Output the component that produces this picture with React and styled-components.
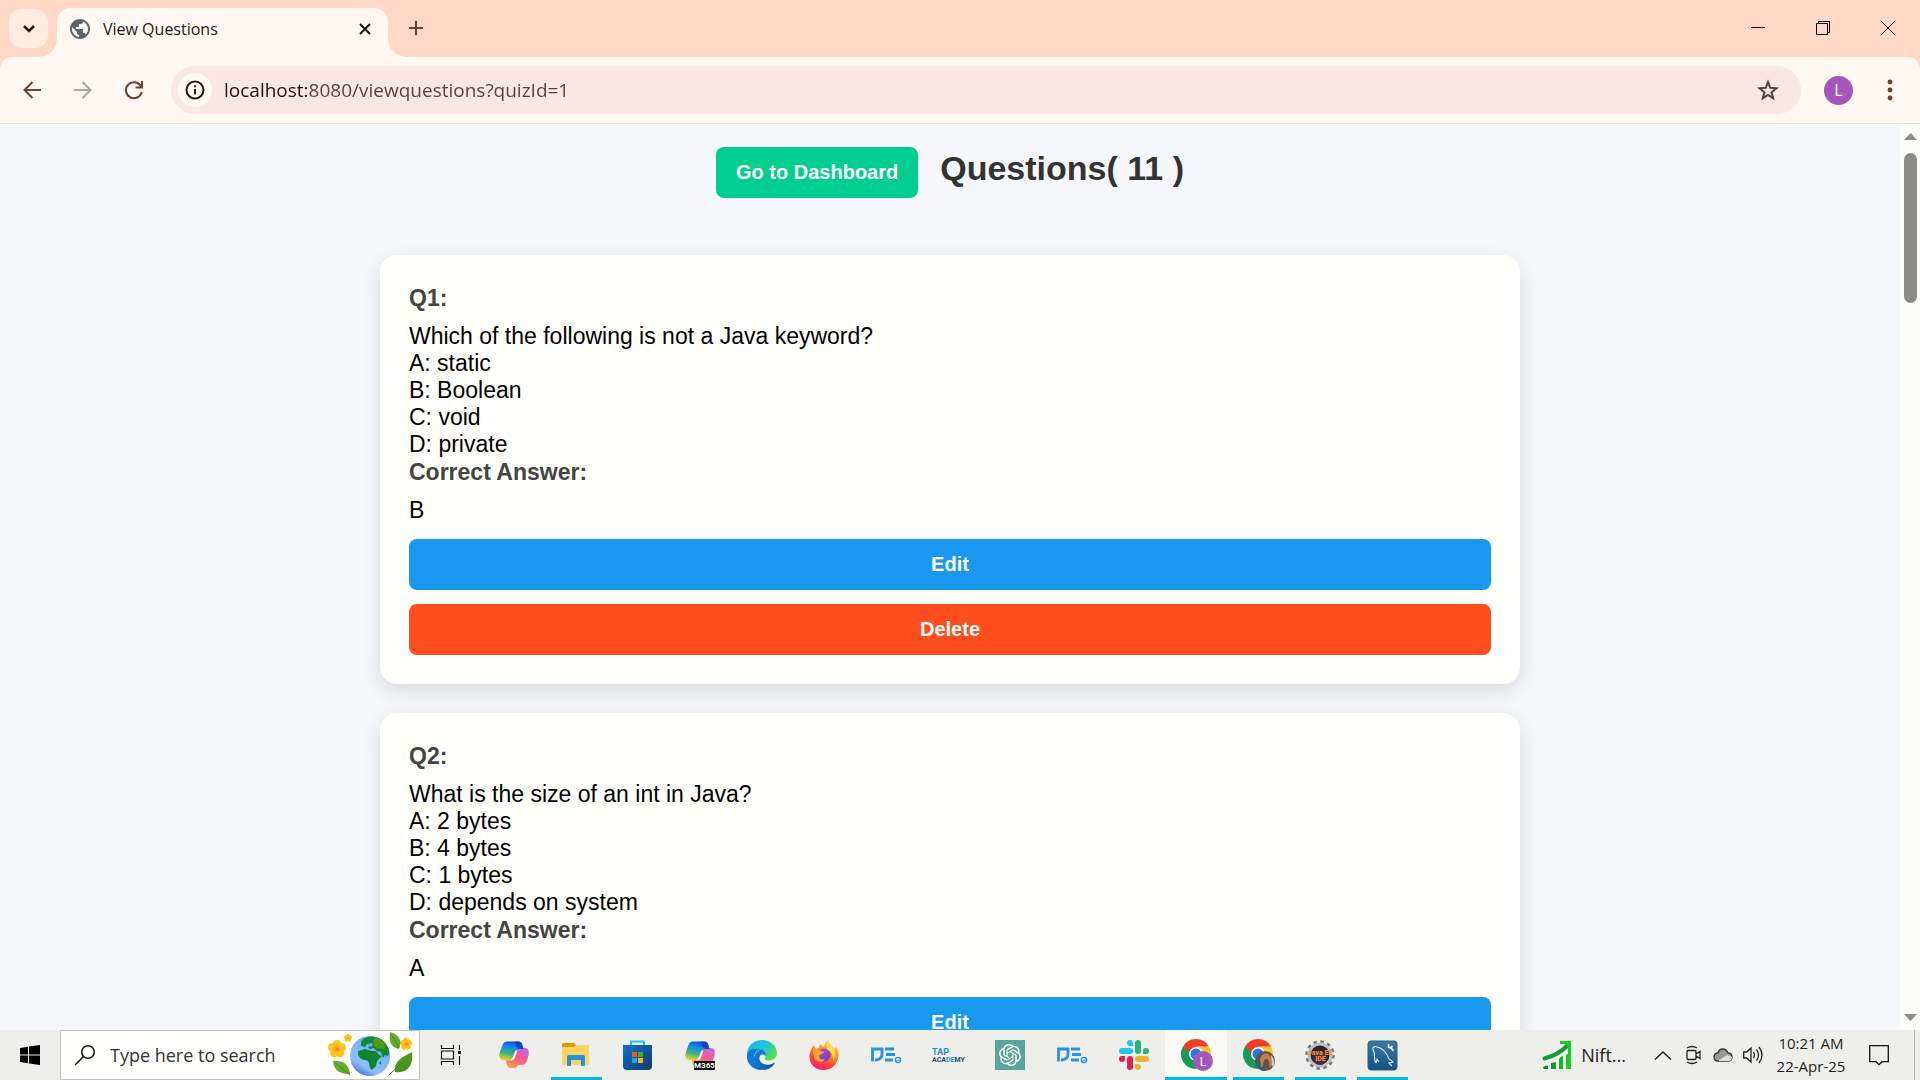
import React from "react";
import styled, { createGlobalStyle, css } from "styled-components";
import { MdPublic } from "react-icons/md";
import { SiOpenai } from "react-icons/si";

const uiFont = `"Open Sans", "Noto Sans", sans-serif`;
const pageFont = `"Liberation Sans", Arial, sans-serif`;

const GlobalStyle = createGlobalStyle`
  * { box-sizing: border-box; }
  body { margin: 0; font-family: ${uiFont}; }
  button { border: 0; padding: 0; background: none; color: inherit; font: inherit; cursor: pointer; }
  input { border: 0; padding: 0; background: none; font: inherit; outline: 0; min-width: 0; }
  svg { display: block; flex: none; overflow: visible; }
`;

const Desktop = styled.div`
  display: flex;
  flex-direction: column;
  height: 100vh;
  overflow: hidden;
`;

/* ---------- browser frame ---------- */

const TabStrip = styled.header`
  display: flex;
  align-items: flex-start;
  height: 57px;
  flex: none;
  padding-left: 9px;
  background: #ffd9c6;
`;

const TabSearch = styled.button`
  display: grid;
  place-items: center;
  width: 39px;
  height: 39px;
  margin: 9px 9px 0 0;
  border-radius: 13px;
  background: #ffece1;
`;

const Tab = styled.div`
  position: relative;
  display: flex;
  align-items: center;
  width: 331px;
  height: 49px;
  margin-top: 8px;
  padding: 0 10px 8px 11px;
  border-radius: 14px 14px 0 0;
  background: #fff7f2;
  color: #291713;
  font-size: 16px;
  line-height: 22px;

  &::before,
  &::after {
    content: "";
    position: absolute;
    bottom: 0;
    width: 17px;
    height: 17px;
  }
  &::before {
    right: 100%;
    background: radial-gradient(circle at 0 0, transparent 16px, #fff7f2 17px);
  }
  &::after {
    left: 100%;
    background: radial-gradient(circle at 100% 0, transparent 16px, #fff7f2 17px);
  }
`;

const TabTitle = styled.span`
  flex: 1;
  margin-left: 11px;
  white-space: nowrap;
`;

const SmallButton = styled.button`
  display: grid;
  place-items: center;
  width: 26px;
  height: 26px;
`;

const NewTab = styled(SmallButton)`
  margin: 15px 0 0 15px;
`;

const WindowControls = styled.div`
  display: flex;
  margin-left: auto;
`;

const WindowButton = styled.button`
  display: grid;
  place-items: center;
  width: 65px;
  height: 56px;
`;

const ToolbarBack = styled.div`
  flex: none;
  background: #ffd9c6;
`;

const Toolbar = styled.nav`
  display: flex;
  align-items: center;
  height: 67px;
  padding: 0 5px 0 6px;
  border-bottom: 1px solid #f7ddd4;
  border-radius: 12px 12px 0 0;
  background: #fff7f2;
`;

const NavButton = styled.button`
  display: grid;
  place-items: center;
  width: 51px;
  height: 48px;
`;

const AddressBar = styled.div`
  display: flex;
  align-items: center;
  flex: 1;
  height: 48px;
  margin-left: 12px;
  padding: 0 20px 0 7px;
  border-radius: 24px;
  background: #f8e7e4;
`;

const SiteInfo = styled.button`
  display: grid;
  place-items: center;
  width: 34px;
  height: 34px;
  border-radius: 50%;
  background: #fff7f2;
`;

const Address = styled.input`
  flex: 1;
  height: 30px;
  margin-left: 12px;
  font-size: 19px;
  color: #53413c;
  background: linear-gradient(90deg, #1c0f0c 84px, #53413c 84px);
  background-clip: text;
  -webkit-background-clip: text;
  -webkit-text-fill-color: transparent;
`;

const Avatar = styled.button`
  width: 29px;
  height: 29px;
  margin: 0 11px 0 23px;
  border-radius: 50%;
  background: #a457b8;
  color: #fff;
  font-size: 16px;
  line-height: 29px;
`;

/* ---------- questions page ---------- */

const Viewport = styled.div`
  display: flex;
  flex: 1;
  min-height: 0;
  background: #f6f7fa;
`;

const Page = styled.main`
  flex: 1;
  overflow-y: auto;
  scrollbar-width: none;
  padding: 23px 24px;
  font-family: ${pageFont};
`;

const PageHeader = styled.div`
  display: flex;
  align-items: center;
  justify-content: center;
  gap: 22px;
  margin-bottom: 57px;
`;

const Heading = styled.h1`
  margin: 0;
  padding-bottom: 10px;
  font-size: 34px;
  line-height: 38px;
  color: #333;
`;

const tones = { go: "#00ce8e", edit: "#1998ef", remove: "#ff4d1d" };

const ActionButton = styled.button`
  height: 51px;
  padding: 0 20px;
  border-radius: 8px;
  background: ${(p) => tones[p.$tone]};
  color: #fff;
  font-family: ${pageFont};
  font-size: 20px;
  font-weight: 700;
`;

const Card = styled.article`
  display: flex;
  flex-direction: column;
  max-width: 1140px;
  margin: 0 auto 29px;
  padding: 29px;
  border-radius: 17px;
  background: #fffffc;
  box-shadow: 0 7px 20px rgba(0, 0, 0, 0.12);
`;

const Label = styled.h3`
  margin: 0 0 11px;
  font-size: 23px;
  line-height: 28px;
  color: #444;
`;

const Line = styled.p`
  margin: 0;
  font-size: 23px;
  line-height: 27px;
  color: #000;
`;

const Actions = styled.div`
  display: flex;
  flex-direction: column;
  gap: 14px;
  margin-top: 15px;
`;

const ScrollTrack = styled.div`
  display: flex;
  flex-direction: column;
  align-items: center;
  width: 20px;
  padding: 9px 0;
  background: #fcfdfa;
`;

const ScrollThumb = styled.div`
  width: 13px;
  height: 150px;
  margin: 13px 0 auto;
  border-radius: 7px;
  background: #8b8b89;
`;

/* ---------- taskbar ---------- */

const Taskbar = styled.footer`
  display: flex;
  flex: none;
  height: 50px;
  background: #eeeeeb;
  color: #222;
`;

const TaskButton = styled.button`
  display: grid;
  place-items: center;
  width: ${(p) => p.$width || 62}px;
  height: 50px;
  ${(p) =>
    p.$open &&
    css`
      background: linear-gradient(#00b7ea, #00b7ea) center bottom / ${p.$active ? 62 : 51}px 3px no-repeat
        ${p.$active ? "#f9f9f6" : "transparent"};
    `}
`;

const SearchBox = styled.label`
  display: flex;
  align-items: center;
  width: 360px;
  padding: 0 5px 0 14px;
  border: 1px solid #c6c6c6;
  background: #fffffd;
`;

const SearchInput = styled.input`
  flex: 1;
  height: 40px;
  margin-left: 15px;
  font-size: 18px;
  &::placeholder { color: #333; opacity: 1; }
`;

const Tray = styled.div`
  display: flex;
  align-items: center;
  margin-left: auto;
`;

const Stocks = styled.button`
  display: flex;
  align-items: center;
  gap: 10px;
  height: 50px;
  margin-right: 22px;
  font-size: 18px;
`;

const TrayButton = styled.button`
  display: grid;
  place-items: center;
  width: 30px;
  height: 50px;
`;

const Clock = styled.button`
  width: 86px;
  height: 50px;
  font-size: 15px;
  line-height: 23px;
  text-align: center;
  white-space: nowrap;
`;

const Notifications = styled(TrayButton)`
  width: 50px;
  margin-right: 10px;
`;

const ShowDesktop = styled.button`
  width: 6px;
  height: 50px;
  border-left: 1px solid #b9b9b7;
`;

/* ---------- drawings ---------- */

const Stroke = ({ w = 20, h = w, color = "#6b4132", sw = 2, children, ...rest }) => (
  <svg width={w} height={h} viewBox={`0 0 ${w} ${h}`} fill="none" stroke={color} strokeWidth={sw} aria-hidden="true" {...rest}>
    {children}
  </svg>
);

const Copilot = ({ id, badge }) => (
  <svg width="30" height="30" viewBox="0 0 30 30" aria-hidden="true">
    <defs>
      <linearGradient id={`${id}a`} x1=".6" y1="0" x2=".3" y2="1">
        <stop offset="0" stopColor="#1349d3" /><stop offset=".35" stopColor="#1191e6" />
        <stop offset=".65" stopColor="#3fb37a" /><stop offset="1" stopColor="#f5d327" />
      </linearGradient>
      <linearGradient id={`${id}b`} x1=".8" y1="0" x2=".3" y2="1">
        <stop offset="0" stopColor="#b66af0" /><stop offset=".45" stopColor="#f9588f" />
        <stop offset="1" stopColor="#ff9a4a" />
      </linearGradient>
    </defs>
    <path fill={`url(#${id}b)`} d="M22 25h-3c-1 2-2 3-4 3h-3c-3 0-4-2-4.500-4L7 20h4c2 0 3-1.500 3.600-3.500l2.400-6c.6-1.800 2-2.500 4-2.500h4.500c4 0 5 3.500 4 7.500l-2 6c-.8 2.500-2.500 3.500-5.500 3.500z" />
    <path fill={`url(#${id}a)`} d="M8 1.500h11c3 0 4 2 4.300 3.500L24.500 9H20c-2 0-3 1.200-3.600 3l-2.600 6c-.7 1.600-2 2.500-4 2.500H5C.8 20.500-.5 17 .7 12.500L3.500 5C4.500 2.500 5.800 1.500 8 1.500z" />
    <path fill="#1237b5" d="M16 1.500h3c3 0 4 2 4.300 3.500L24.500 9H20c-2-1-3-3-4-7.500z" opacity=".7" />
    <path fill="#fff" d="M16.500 10.500h2l-3 8q-1 2-3 2h-1.500q2-1 3-4z" opacity=".85" />
    {badge && (
      <>
        <rect x="9" y="21" width="21" height="9" rx="1" fill="#080808" />
        <text x="19.500" y="28.200" fontSize="8" fontWeight="700" fill="#fff" textAnchor="middle" fontFamily="Roboto, sans-serif">M365</text>
      </>
    )}
  </svg>
);

const Folder = () => (
  <svg width="28" height="26" viewBox="0 0 28 26" aria-hidden="true">
    <path fill="#dc9a04" d="M1 1h11l2 2v4H0V2z" />
    <path fill="#fcd462" d="M0 5h12l2-2h13v20H0z" />
    <path fill="#2392dc" d="M5 24V15q0-2 2-2h14q2 0 2 2v9h-4v-6H9v6z" />
  </svg>
);

const Store = () => (
  <svg width="30" height="30" viewBox="0 0 30 30" aria-hidden="true">
    <defs><linearGradient id="store" x2="1" y2="1"><stop stopColor="#0a72c6" /><stop offset="1" stopColor="#173a70" /></linearGradient></defs>
    <path d="M8 6V1.500h13V6" fill="none" stroke="#1cc3f5" strokeWidth="2" />
    <path fill="url(#store)" d="M0 5h29v21q0 4-4 4H4q-4 0-4-4z" />
    <path fill="#f35325" d="M9 12h5v5H9z" /><path fill="#3fb60f" d="M15 12h5v5h-5z" />
    <path fill="#12a8ee" d="M9 18h5v5H9z" /><path fill="#ffb900" d="M15 18h5v5h-5z" />
  </svg>
);

const Edge = () => (
  <svg width="30" height="30" viewBox="0 0 30 30" aria-hidden="true">
    <defs>
      <linearGradient id="edgeTop" x1="0" y1="0" x2="1" y2=".6"><stop stopColor="#17b0ee" /><stop offset=".6" stopColor="#1ec9d2" /><stop offset="1" stopColor="#5fdc4e" /></linearGradient>
      <linearGradient id="edgeLow" x2="1" y2="1"><stop stopColor="#1683dd" /><stop offset="1" stopColor="#0b55a4" /></linearGradient>
    </defs>
    <path fill="url(#edgeTop)" d="M0 14C0 6 7 0 15 0s15 6 15 13c0 5-4 7.500-8 7.500-3 0-5-1-4-2.500 2-3 1-8-5-8C6 10 1 12 0 17z" />
    <path fill="#087bd8" d="M0 17C0 9 8 7.500 12.500 9.500 9 11 6.500 15 7 19c.5 6 5 9.500 10 10.800C7 31 0 24.500 0 17z" />
    <path fill="url(#edgeLow)" d="M12.500 9.500C17 9 20 13 18.500 16.500c-1-3-5-3-6 .5-1 5 4.500 8.500 10 7.500 3-.4 5-2.200 5.500-2-1.500 4-6 7-11 7.500C5 28 4 14.500 12.500 9.500z" />
  </svg>
);

const Firefox = () => (
  <svg width="30" height="30" viewBox="0 0 30 30" aria-hidden="true">
    <defs>
      <linearGradient id="ffBody" x1=".8" y1="0" x2=".3" y2="1"><stop stopColor="#ffe14a" /><stop offset=".4" stopColor="#ff8b21" /><stop offset=".75" stopColor="#ff3f3f" /><stop offset="1" stopColor="#f22079" /></linearGradient>
      <linearGradient id="ffCore" x2=".4" y2="1"><stop stopColor="#d13edb" /><stop offset="1" stopColor="#6743c9" /></linearGradient>
    </defs>
    <path fill="url(#ffBody)" d="M3 8l1-3 3 4 3-1 1-4 4 3c0-3 2-5 4-7 1 4 5 6 6 9l2-2c3 4 3 8 2 12-2 7-8 11-14 11C6 30 0 24 .5 16 1 12 2 10 3 8z" />
    <circle cx="15" cy="15" r="6.500" fill="url(#ffCore)" />
    <path fill="#ffa52c" d="M4 9c2-1 5 0 7 2l4 1c0 2-4 2-5 4 0 3 3 4 6 3-1 3-7 4-10 0-2-3-2-7-2-10z" />
    <path fill="#ffe64d" d="M19 0c1 5 6 7 7 12 1 4 0 7-2 9 0-6-1-9-5-11-3-3-2-7 0-10z" opacity=".85" />
  </svg>
);

const DeLogo = () => (
  <svg width="31" height="16" viewBox="0 0 31 16" fill="none" stroke="#2593ea" strokeWidth="2.800" aria-hidden="true">
    <path d="M1.500 14.500V2H11v5q0 5-6 6H4M14 2h9M15 7.500h9M14 13h8" />
    <circle cx="27" cy="13" r="2.600" strokeWidth="1.400" /><path d="M24.500 14.500l5-2" strokeWidth="1" />
  </svg>
);

const TapLogo = () => (
  <svg width="32" height="14" viewBox="0 0 32 14" aria-hidden="true" fontFamily="Roboto, sans-serif" fontWeight="700">
    <text x="0" y="7" fontSize="9" fill="#2491d8">TAP</text>
    <text x="0" y="14" fontSize="7" fill="#1e4a66">ACA<tspan fill="#2491d8">DE</tspan>MY</text>
  </svg>
);

const ChatGpt = () => (
  <svg width="30" height="30" viewBox="0 0 30 30" aria-hidden="true">
    <path fill="#58a69b" d="M0 0h30v30H0z" />
    <SiOpenai x="4" y="4" size={22} color="#fff" />
  </svg>
);

const Slack = () => (
  <svg width="30" height="30" viewBox="0 0 30 30" aria-hidden="true">
    <path fill="#1fc5f2" d="M11 0a3 3 0 0 1 3 3v3h-3a3 3 0 0 1 0-6z" /><rect y="8" width="14" height="6" rx="3" fill="#1fc5f2" />
    <path fill="#25b67c" d="M30 11a3 3 0 0 1-3 3h-3v-3a3 3 0 0 1 6 0z" /><rect x="16" width="6" height="14" rx="3" fill="#25b67c" />
    <path fill="#ecb22e" d="M19 30a3 3 0 0 1-3-3v-3h3a3 3 0 0 1 0 6z" /><rect x="16" y="16" width="14" height="6" rx="3" fill="#ecb22e" />
    <path fill="#e91e4f" d="M0 19a3 3 0 0 1 3-3h3v3a3 3 0 0 1-6 0z" /><rect x="8" y="16" width="6" height="14" rx="3" fill="#e91e4f" />
  </svg>
);

const Chrome = ({ photo }) => (
  <svg width="32" height="32" viewBox="-1 0 32 32" aria-hidden="true">
    <path fill="#159b58" d="M15 15L2 7.500A15 15 0 0 0 15 30l6-11z" />
    <path fill="#fcca2c" d="M15 15l6 4-6 11A15 15 0 0 0 28 7.500H15z" />
    <path fill="#f03d25" d="M15 15H9L2 7.500A15 15 0 0 1 28 7.500H15z" />
    <circle cx="15" cy="15" r="7" fill="#fff" /><circle cx="15" cy="15" r="5.500" fill="#2579ed" />
    {photo ? (
      <>
        <circle cx="22" cy="22" r="10" fill="#615349" />
        <path fill="#2e607d" d="M14 28q1-9 4-9l3 13q-4 0-7-4z" />
        <path fill="#c97953" d="M17 20c1-6 8-8 11-2l1 8-3 3c1-5 0-9-3-9-3-1-2 9-5 8z" />
        <path fill="#d8c8b8" d="M28 16q4 4 3 10l-2 2z" />
      </>
    ) : (
      <>
        <circle cx="22" cy="22" r="10" fill="#a457b8" />
        <text x="22" y="26.500" fontSize="12" fill="#fff" textAnchor="middle" fontFamily="Roboto, sans-serif">L</text>
      </>
    )}
  </svg>
);

const JavaEE = () => (
  <svg width="30" height="30" viewBox="0 0 30 30" aria-hidden="true">
    <circle cx="15" cy="15" r="13" fill="none" stroke="#777" strokeWidth="3.500" strokeDasharray="3.400 3.400" />
    <circle cx="15" cy="15" r="11" fill="#2c2432" stroke="#c1c1c1" strokeWidth="3" />
    <circle cx="15" cy="18" r="7" fill="#3f2d55" />
    <g fontFamily="Roboto, sans-serif" fontWeight="900" fill="#f58a1f" textAnchor="middle">
      <text x="15" y="14.500" fontSize="7">Java EE</text><text x="15.500" y="21" fontSize="7">IDE</text>
    </g>
  </svg>
);

const MySql = () => (
  <svg width="29" height="29" viewBox="0 0 29 29" aria-hidden="true">
    <defs><linearGradient id="sql" y2="1" x2="0"><stop stopColor="#3d7ba5" /><stop offset="1" stopColor="#125180" /></linearGradient></defs>
    <rect width="29" height="29" rx="3" fill="url(#sql)" stroke="#27618a" />
    <path d="M8 22C5 18 8 13 5 9c-1-3 2-4 4-3 6 1 10 7 12 12l4 3-4 1 3 3M8 22l1-4 2 3" fill="none" stroke="#dce9f2" strokeWidth="1.100" />
    <path d="M20.500 3v3l2 1 2-2M22.500 6l3 4" fill="none" stroke="#fff" strokeWidth="1.600" />
  </svg>
);

const Flower = ({ x, y, r }) => (
  <g transform={`translate(${x} ${y}) scale(${r / 10})`}>
    {[0, 72, 144, 216, 288].map((a) => (
      <circle key={a} cx="0" cy="-5.500" r="4.800" fill="#fbc51c" transform={`rotate(${a})`} />
    ))}
    <circle r="4" fill="#ffa62b" /><circle r="2" fill="#ff7a2c" />
  </g>
);

const EarthArt = () => (
  <svg width="86" height="46" viewBox="0 0 86 46" aria-hidden="true">
    <defs>
      <linearGradient id="sea" x1=".8" y1="0" x2=".2" y2="1"><stop stopColor="#3f8fe8" /><stop offset=".4" stopColor="#78b6ff" /><stop offset=".75" stopColor="#8fbcff" /><stop offset="1" stopColor="#3566d4" /></linearGradient>
      <linearGradient id="leaf" x2="1" y2="1"><stop stopColor="#8cc63a" /><stop offset="1" stopColor="#3c8d1c" /></linearGradient>
    </defs>
    <circle cx="42" cy="24" r="20" fill="url(#sea)" />
    <path fill="#0f8a2c" d="M33 10c2-4 8-6 14-5 5 1 9 4 11 7 3 4 4 9 2 12l-3-1-2 3-2-6-4-1-3-3-5 1-1-2 5-1-1-3-5 1-2 3-4-1z" />
    <path fill="#0c862b" d="M30 19l7-2 6 2h5l3 4 3 1-5 5-1 5-4 4c-3-1-2-6-4-9l-7-2-3-4z" />
    <path fill="#4d9b12" d="M46 5c6 1 10 4 12 7l-2 5-8-1-3-4z" /><path fill="#0c862b" d="M51 31l2-2v4z" />
    <Flower x={9} y={17} r={9} /><Flower x={20} y={6} r={4} /><Flower x={78} y={12} r={6} />
    <path fill="url(#leaf)" d="M5 29c8-1 16 2 17 13-8 0-16-2-17-13zM62 0c8 2 13 8 9 17-9-2-10-8-9-17zM84 20c2 12-4 22-17 20-1-12 8-15 17-20z" />
    <path d="M7 31l15 12M63 2l8 14M83 22L61 43" fill="none" stroke="#3c8d1c" />
  </svg>
);

const StocksIcon = () => (
  <svg width="28" height="28" viewBox="0 0 28 28" aria-hidden="true">
    <defs><linearGradient id="up" x2="1" y2="0"><stop stopColor="#078038" /><stop offset="1" stopColor="#22cf22" /></linearGradient></defs>
    <path d="M1.500 17.500Q15 14 24 5" fill="none" stroke="#0f9a34" strokeWidth="4" strokeLinecap="round" />
    <path fill="#1fc925" d="M17 0h11v11l-3 2V7l-3-4h-5z" />
    <path fill="url(#up)" d="M0 27q0-2 5-2.500V28H1zM8 22l5-1v7H8zM16 18q2-3 4-3v13h-4zM23 14l5-4v18h-5z" />
  </svg>
);

/* ---------- data ---------- */

const questions = [
  { text: "Which of the following is not a Java keyword?", options: ["static", "Boolean", "void", "private"], answer: "B" },
  { text: "What is the size of an int in Java?", options: ["2 bytes", "4 bytes", "1 bytes", "depends on system"], answer: "A" },
];

const apps = [
  { name: "Copilot", icon: <Copilot id="cp" /> },
  { name: "File Explorer", icon: <Folder />, open: true },
  { name: "Microsoft Store", icon: <Store /> },
  { name: "Microsoft 365", icon: <Copilot id="ms" badge /> },
  { name: "Edge", icon: <Edge /> },
  { name: "Firefox", icon: <Firefox /> },
  { name: "DE", icon: <DeLogo /> },
  { name: "Tap Academy", icon: <TapLogo /> },
  { name: "ChatGPT", icon: <ChatGpt /> },
  { name: "DE Portal", icon: <DeLogo /> },
  { name: "Slack", icon: <Slack /> },
  { name: "Chrome", icon: <Chrome />, open: true, active: true },
  { name: "Chrome, second profile", icon: <Chrome photo />, open: true },
  { name: "Eclipse", icon: <JavaEE />, open: true },
  { name: "MySQL Workbench", icon: <MySql />, open: true },
];

const Question = ({ number, text, options, answer }) => (
  <Card>
    <Label>Q{number}:</Label>
    <Line>{text}</Line>
    {options.map((option, i) => (
      <Line key={option}>{`${"ABCD"[i]}: ${option}`}</Line>
    ))}
    <Label>Correct Answer:</Label>
    <Line>{answer}</Line>
    <Actions>
      <ActionButton $tone="edit">Edit</ActionButton>
      <ActionButton $tone="remove">Delete</ActionButton>
    </Actions>
  </Card>
);

export default function App() {
  return (
    <Desktop>
      <GlobalStyle />
      <TabStrip>
        <TabSearch aria-label="Search tabs">
          <Stroke w={12} h={8} color="#291713" sw={2.5}><path d="M1 1l5 5 5-5" /></Stroke>
        </TabSearch>
        <Tab>
          <MdPublic size={24} color="#5f6669" />
          <TabTitle>View Questions</TabTitle>
          <SmallButton aria-label="Close tab">
            <Stroke w={12} color="#1c1210" sw={2}><path d="M1 1l10 10M11 1L1 11" /></Stroke>
          </SmallButton>
        </Tab>
        <NewTab aria-label="New tab">
          <Stroke w={14}><path d="M7 0v14M0 7h14" /></Stroke>
        </NewTab>
        <WindowControls>
          <WindowButton aria-label="Minimize"><Stroke w={14} h={2} color="#000" sw={1}><path d="M0 .5h14" /></Stroke></WindowButton>
          <WindowButton aria-label="Restore">
            <Stroke w={14} color="#000" sw={1}><path d="M.5 2.500h11v11H.5zM2.500 2V.5h11v11H12" /></Stroke>
          </WindowButton>
          <WindowButton aria-label="Close"><Stroke w={14} color="#000" sw={1}><path d="M0 0l14 14M14 0L0 14" /></Stroke></WindowButton>
        </WindowControls>
      </TabStrip>
      <ToolbarBack>
        <Toolbar>
          <NavButton aria-label="Back"><Stroke w={18}><path d="M18 9H2M9.500 1L1.500 9l8 8" /></Stroke></NavButton>
          <NavButton aria-label="Forward"><Stroke w={18} color="#b5a29c"><path d="M0 9h16M8.500 1l8 8-8 8" /></Stroke></NavButton>
          <NavButton aria-label="Reload">
            <Stroke w={18}><path d="M16 5.500A8 8 0 1 0 16.700 11M17 0v6.500h-6.500" /></Stroke>
          </NavButton>
          <AddressBar>
            <SiteInfo aria-label="Site information">
              <Stroke w={20} color="#291713"><circle cx="10" cy="10" r="8.500" /><path d="M10 9v5.500M10 5.200v2" /></Stroke>
            </SiteInfo>
            <Address aria-label="Address" defaultValue="localhost:8080/viewquestions?quizId=1" />
            <SmallButton aria-label="Bookmark">
              <Stroke w={22} h={20} color="#53413c"><path d="M11 2l2.200 5.800 6.300.5-4.900 4 1.600 6L11 15l-5.200 3.300 1.600-6-4.900-4 6.300-.5z" /></Stroke>
            </SmallButton>
          </AddressBar>
          <Avatar aria-label="Profile L">L</Avatar>
          <NavButton aria-label="Menu">
            <Stroke w={6} h={22} sw={0}><g fill="#6b4132"><circle cx="3" cy="3" r="2.400" /><circle cx="3" cy="11" r="2.400" /><circle cx="3" cy="19" r="2.400" /></g></Stroke>
          </NavButton>
        </Toolbar>
      </ToolbarBack>

      <Viewport>
        <Page>
          <PageHeader>
            <ActionButton $tone="go">Go to Dashboard</ActionButton>
            <Heading>Questions( 11 )</Heading>
          </PageHeader>
          {questions.map((q, i) => (
            <Question key={q.text} number={i + 1} {...q} />
          ))}
        </Page>
        <ScrollTrack>
          <svg width="13" height="7" aria-hidden="true"><path fill="#8b8b89" d="M0 7l6.500-7L13 7z" /></svg>
          <ScrollThumb />
          <svg width="13" height="7" aria-hidden="true"><path fill="#8b8b89" d="M0 0l6.500 7L13 0z" /></svg>
        </ScrollTrack>
      </Viewport>

      <Taskbar>
        <TaskButton $width={60} aria-label="Start">
          <svg width="20" height="20" viewBox="0 0 20 20" aria-hidden="true"><path d="M0 3l8-1.200V9.500H0zM9 1.600L20 0v9.500H9zM0 10.500h8v7.700L0 17zM9 10.500h11V20L9 18.400z" /></svg>
        </TaskButton>
        <SearchBox>
          <Stroke w={20} color="#111" sw={1.5}><circle cx="13" cy="7" r="6.300" /><path d="M8.500 11.500L0 20" /></Stroke>
          <SearchInput aria-label="Search" placeholder="Type here to search" />
          <EarthArt />
        </SearchBox>
        <TaskButton $width={63} aria-label="Task view">
          <Stroke w={21} color="#111" sw={1.2}><path d="M.5 0v3.500h12V0M.5 20v-3.500h12V20M.5 6h12v8H.5zM18.500 0v5M18.500 11v9" /><path d="M17 6h3v3h-3z" fill="#111" stroke="none" /></Stroke>
        </TaskButton>
        {apps.map((app) => (
          <TaskButton key={app.name} aria-label={app.name} $open={app.open} $active={app.active}>{app.icon}</TaskButton>
        ))}
        <Tray>
          <Stocks><StocksIcon />Nift...</Stocks>
          <TrayButton aria-label="Hidden icons"><Stroke w={16} h={9} color="#222" sw={1.5}><path d="M0 8.500L8 1l8 7.500" /></Stroke></TrayButton>
          <TrayButton aria-label="Meet now">
            <Stroke w={15} h={18} color="#222" sw={1.3}><path d="M1 2Q6 -1 11 2M1 16Q6 19 11 16M1 5.500q0-1 1-1h7q1 0 1 1v7q0 1-1 1H2q-1 0-1-1zM10 8l4-2.500v7L10 10" /></Stroke>
          </TrayButton>
          <TrayButton aria-label="OneDrive">
            <Stroke w={20} h={14} color="#333" sw={1.3}><path fill="#999" d="M5 13q-4 0-4-4t4-4q1-4 5-4 3 0 5 4 4 0 4 4t-4 4z" /><path d="M6 12l8-5 5 2q0 4-4 4H6z" fill="#ddd" stroke="none" /></Stroke>
          </TrayButton>
          <TrayButton aria-label="Volume">
            <Stroke w={20} h={18} color="#222" sw={1.3}><path d="M0.700 6h3L8 2v14L3.700 12h-3zM10.500 6q2 3 0 6M13.500 3.500q4 5.500 0 11M16 1q6 8 0 16" /></Stroke>
          </TrayButton>
          <Clock>10:21 AM<br />22-Apr-25</Clock>
          <Notifications aria-label="Notifications">
            <Stroke w={20} h={20} color="#111" sw={1.3}><path d="M.7.7h18.600v16H13l-3 3-3-3H.7z" /></Stroke>
          </Notifications>
          <ShowDesktop aria-label="Show desktop" />
        </Tray>
      </Taskbar>
    </Desktop>
  );
}
